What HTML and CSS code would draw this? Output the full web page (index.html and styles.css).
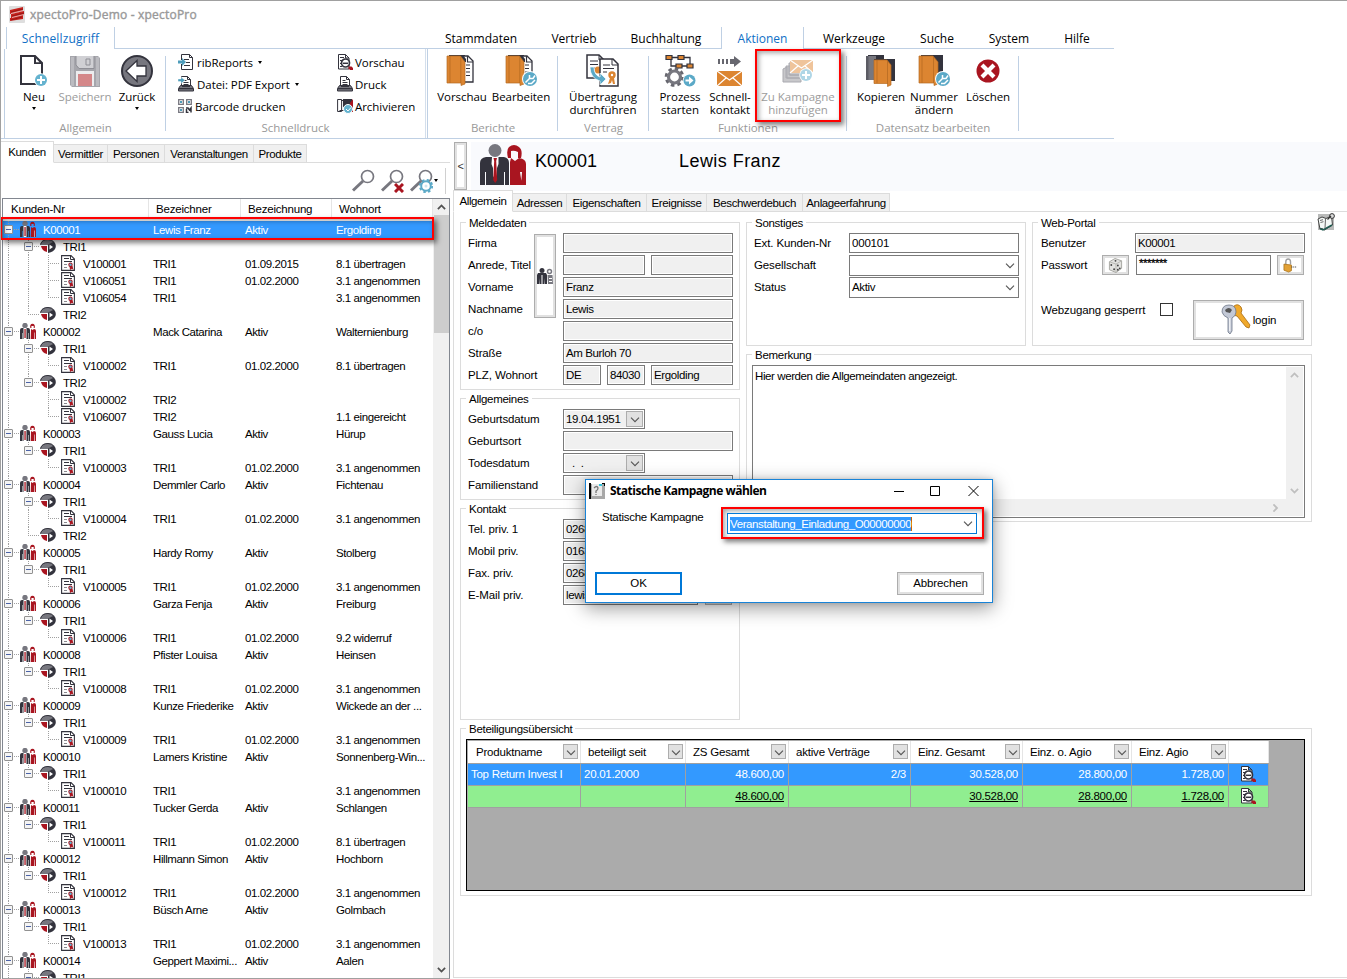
FILE: index.html
```html
<!DOCTYPE html>
<html lang="de">
<head>
<meta charset="utf-8">
<title>xpectoPro-Demo - xpectoPro</title>
<link rel="stylesheet" href="styles.css">
</head>
<body>
<svg class="defs" width="0" height="0">
  <symbol id="i-people" viewBox="0 0 46 42">
    <circle cx="15" cy="6.500" r="6.500" fill="#77777f"/>
    <path fill="#33333d" d="M6 13h18q5 1 5 6v22h-4V28h-1v13H14.500 6V28H5v13H0V19q0-5 6-6z"/>
    <path fill="#fff" d="M12 13h6.500v7l-1.500 4v8l-2 3-2-3v-8l-1.500-4z"/>
    <path fill="#a91520" d="M13.500 14h3.500l-.8 3 1 19-2 3-2-3 1-19z"/>
    <path fill="#a91520" d="M28 14q-2-8 1-11 5-4 10 0 4 3 2 11l-3 0v-6q-4-2-7-1v7z"/>
    <path fill="#a91520" d="M31 14l4 3 4-3q7 1 7 6v21h-5l1-13-2 0 2 13H30V18z"/>
  </symbol>
  <symbol id="i-cust" viewBox="0 0 16 16">
    <circle cx="5" cy="2.500" r="2.700" fill="#77777f"/>
    <path fill="#33333d" d="M2 5h6q2 0 2 2v9H8.500v-6H8v6H2.500v-6H2v6H0V7q0-2 2-2z"/>
    <path fill="#fff" d="M3.500 5h3v11h-3z"/><path fill="#a91520" d="M4.400 6h1.300v9H4.400zM10.300 5Q9.500 1 12.500.8 15.500 1 14.700 5h-1V3h-2.300v2zM11 6l1.500 1L14 6q2 0 2 2v8h-1.500v-6l-.3 6h-3.500z"/>
    <path fill="#fff" d="M14 9.500h.5V16H14z"/>
  </symbol>
  <symbol id="i-pie" viewBox="0 0 16 14">
    <path fill="#77777f" d="M0 6q1-6 8-6 4 0 6 3L8 6z"/><path fill="none" stroke="#33333d" d="M.5 5.500Q2 .5 8 .5q4 0 6 3"/>
    <path fill="#a91520" d="M1 7h6v6Q2 12 1 7z"/><path fill="#33333d" d="M8 5.500l6-3q2.500 3 1.500 6.500-1.500 4-7.500 5z"/><path fill="#fff" d="M9.500 5.500L13 8l-3.500 2.500z"/>
  </symbol>
  <symbol id="i-doc" viewBox="0 0 14 16">
    <path fill="#fff" stroke="#33333d" stroke-width="1.100" d="M.6.600h9.400l3.400 3.400v11.400H.6z"/>
    <path stroke="#33333d" d="M9.500.5v4h4M3 3.500h5M3 6.500h8" fill="none"/><path stroke="#88888e" d="M3 9.500h3M3 12.500h3"/>
    <path fill="#a91520" d="M8.500 11h3l1 4-1.500-1.200L9 15z"/><circle cx="9.500" cy="9.800" r="2.200" fill="#a91520"/><circle cx="9.500" cy="9.800" r="1.200" fill="#65b3cf"/>
  </symbol>
  <symbol id="i-new" viewBox="0 0 32 34">
    <path fill="#fff" stroke="#33333d" stroke-width="2" d="M3 2h14l7 7v21H3z"/><path fill="#33333d" d="M16 1l9 9h-9z"/><path fill="#fff" d="M18 4.500l3.500 3.700H18z"/>
    <circle cx="23" cy="26" r="6.800" fill="#fff"/><circle cx="23" cy="26" r="6" fill="#65b3cf"/><path stroke="#fff" stroke-width="2" d="M19 26h8M23 22v8"/>
  </symbol>
  <symbol id="i-save" viewBox="0 0 32 34">
    <path fill="#a6a6ac" d="M1 2h28l2 2v29H3l-2-2z"/><path fill="#bbbbc0" d="M2 3h3v29H2zM27 3h3v29h-3z"/><path fill="#d0d0d4" d="M7 2h18v12H10l-3-3z"/><path fill="none" stroke="#8f8f96" d="M7 2v9l3 3.500h15V2M17 5h4v6h-4z"/><path fill="#ececee" d="M7 17h18v15H7z"/><path fill="#d48789" d="M9 20h14v12H9z"/>
  </symbol>
  <symbol id="i-back" viewBox="0 0 32 32">
    <circle cx="16" cy="16" r="15" fill="#77777f" stroke="#33333d" stroke-width="2"/><path fill="#fff" stroke="#33333d" stroke-width="1.300" d="M5 16L16 5.500V11h9v10h-9v5.500z"/>
  </symbol>
  <symbol id="i-page" viewBox="0 0 16 16">
    <path fill="#fff" stroke="#33333d" d="M3.500 6V.5h8l3 3v12h-11V10M11.500.5v3h3M6 5.500h5M8 8.500h4M6 11.500h6"/><path fill="#4e9dbb" d="M0 6.500h4V4l4 4-4 4V9.500H0z"/>
  </symbol>
  <symbol id="i-print" viewBox="0 0 16 16">
    <path fill="#fff" stroke="#33333d" d="M3.500 10V.5h6l3 3V10M9.500.5v3h3M5.500 4.500h3M5.500 6.500h5M5.500 8.500h5"/><path fill="#77777f" stroke="#33333d" d="M2.500 9.500h11l2 3v2.500H.5v-2.500z"/><path fill="#33333d" d="M1 12h14v1.300H1zM4 9h8v2H4z"/>
  </symbol>
  <symbol id="i-export" viewBox="0 0 16 16">
    <use href="#i-print"/><path fill="#4e9dbb" stroke="#fff" stroke-width=".4" d="M0 3h3V1l4 3.300L3 7.500v-2H0z"/>
  </symbol>
  <symbol id="i-qr" viewBox="0 0 14 14">
    <path fill="none" stroke="#77777f" stroke-width="1.300" d="M.7.7h4.600v4.600H.7zM8.700.7h4.600v4.600H8.700zM.7 8.700h4.600v4.600H.7z"/><path fill="#4e9dbb" d="M2 2h2v2H2zM10 2h2v2h-2zM2 10h2v2H2z"/><path stroke="#33333d" stroke-width="1.500" fill="none" d="M8 9h2l1.500 2L13 9v4.500M8.500 10v3.500h2"/>
  </symbol>
  <symbol id="i-view" viewBox="0 0 16 16">
    <path fill="#fff" stroke="#33333d" d="M1.500.5h7l3.500 3.500v11H1.500zM8.500.5v3.500h3.500M3 3.500h4M3 6.500h2M3 9.500h2M3 12.500h2"/><circle cx="8.500" cy="9" r="4" fill="#fff" stroke="#33333d" stroke-width="1.700"/><path stroke="#33333d" stroke-width="1.500" d="M6 9.300h5"/><path fill="#a91520" d="M11.500 12.500h3l1.500 1.500v2h-3l-1.500-1.500z"/>
  </symbol>
  <symbol id="i-arch" viewBox="0 0 16 16">
    <path fill="#fff" stroke="#33333d" d="M.6 1.500h4v12h-4zM4 2.500h4v10H2.500"/><path fill="#33333d" d="M6 1h9v8H6z"/><path fill="#a91520" d="M13 5l3-4v13h-3z"/><circle cx="11" cy="11" r="4.500" fill="#65b3cf" stroke="#fff"/><path fill="none" stroke="#fff" d="M9 11l2 2 3-3.500"/>
  </symbol>
  <symbol id="i-book" viewBox="0 0 32 34">
    <path fill="#33333d" d="M3 1h16v6H3z"/><path fill="#fff" stroke="#33333d" stroke-width="1.300" d="M12 2h10l5 5v21H12z"/><path fill="none" stroke="#33333d" stroke-width="1.200" d="M21.500 2v6H27M20 11h4M20 14.500h4M20 18h4M20 21.500h4"/>
    <path fill="#33333d" d="M12 1h5l3 4v3h-8z"/>
    <path fill="#dc8531" stroke="#b66b22" stroke-width=".7" d="M1 2h13.500l4.500 6v22l-4 1.500V29H1z"/><path stroke="#b66b22" stroke-width=".8" d="M4 2v27M14.800 3v26" fill="none"/>
  </symbol>
  <symbol id="i-blob" viewBox="0 0 16 16"><circle cx="8" cy="8" r="8" fill="#fff"/><circle cx="8" cy="8" r="7" fill="#5ba9c7"/><path fill="none" stroke="#fff" stroke-width="1.500" d="M3.500 11.500l4-4M7.500 4v3.500H11l2-3M6 12.500h3.500l3.500-3.500"/></symbol>
  <symbol id="i-trans" viewBox="0 0 34 34">
    <path fill="#fff" stroke="#33333d" stroke-width="1.500" d="M1 1h12l5 5v18H1z"/><path fill="none" stroke="#33333d" d="M4 7h8M4 10.500h8M4 14h5M13 1v5h5"/><circle cx="12" cy="16" r="3.500" fill="#dc8531"/>
    <path fill="#fff" stroke="#33333d" stroke-width="1.500" d="M14 5h13l5 5v22H14z"/><path fill="none" stroke="#33333d" d="M26 5v6h6M17 11h7M17 14.500h11M17 18h4"/><circle cx="26" cy="21" r="3.700" fill="#dc8531"/><circle cx="26" cy="21" r="1.200" fill="#fff"/><path fill="#dc8531" d="M24 24l-2 6 3-1 1-3 1 4 2 0-1-6z"/>
    <path fill="#5ba9c7" stroke="#fff" stroke-width=".7" d="M4 13h4q0 8 6 10v-4l6 6-6 6v-4Q4 24 4 13z"/>
  </symbol>
  <symbol id="i-proc" viewBox="0 0 32 34">
    <path fill="none" stroke="#33333d" stroke-width="1.300" d="M6 3.500h20V12M7 5v7h16"/><path fill="#dc8531" stroke="#33333d" stroke-width="1.200" d="M2 1.500h6v4H2zM14 1.500h6v4h-6zM12 10h6v4h-6zM23 10h6v4h-6z"/>
    <circle cx="10.500" cy="23" r="8.300" fill="none" stroke="#67676f" stroke-width="3" stroke-dasharray="3.500 3.020"/><circle cx="10.500" cy="23" r="6" fill="#fff" stroke="#77777f" stroke-width="3.200"/><circle cx="25.500" cy="26.500" r="6.800" fill="#fff"/><circle cx="25.500" cy="26.500" r="6" fill="#5ba9c7"/><path fill="#fff" d="M21.500 25.500H25v-3l4.500 4-4.500 4v-3h-3.500z"/>
  </symbol>
  <symbol id="i-mail" viewBox="0 0 26 32">
    <path fill="#67676f" d="M1 4h2v5H1zM5 4h2v5H5zM9 4h2v5H9zM13 4h4V1l7 5.500-7 5.500V9h-4z"/><path fill="#dc8531" d="M0 16h25v15H0z"/><path fill="none" stroke="#fff" stroke-width="1.200" d="M0 16l12.500 9L25 16M0 31l9-8M25 31l-9-8"/>
  </symbol>
  <symbol id="i-camp" viewBox="0 0 32 24">
    <path fill="#c8c8cb" stroke="#aaaab0" d="M1 9l4-2v11h14v4H1zM4 6h4v9h13v3H4zM7 3h3v9h13v3H7z"/><path fill="#efc49b" d="M8 0h23v13H8z"/><path fill="none" stroke="#fff" stroke-width="1.200" d="M8 0l11.500 8L31 0M8 13l8-7M31 13l-8-7"/><circle cx="24" cy="15" r="6.700" fill="#fff"/><circle cx="24" cy="15" r="6" fill="#afd6e6"/><path stroke="#fff" stroke-width="2" d="M20 15h8M24 11v8"/>
  </symbol>
  <symbol id="i-copy" viewBox="0 0 32 34">
    <path fill="#33333d" d="M3 1h16v8H3zM17 5h13v22H17z"/><path fill="#77777f" d="M1 2h10v24H1z"/><path fill="#5c5c64" d="M1 2h2.500v24H1z"/><path fill="#33333d" d="M9 5h16v4H9z"/><path fill="#dc8531" stroke="#b66b22" stroke-width=".7" d="M9 6h13l4 5v20l-3.500 1.500V29.500H9z"/><path stroke="#b66b22" stroke-width=".8" d="M12 6v23M22.500 7v23"/>
  </symbol>
  <symbol id="i-folder" viewBox="0 0 32 34">
    <path fill="#33333d" d="M3 1h22v25H3z"/><path fill="#dc8531" stroke="#b66b22" stroke-width=".7" d="M1 2h14l5 6v22l-4 1.500V29H1z"/><path stroke="#b66b22" stroke-width=".8" d="M4 2v27M15.500 3v26"/>
  </symbol>
  <symbol id="i-del" viewBox="0 0 24 24"><circle cx="12" cy="12" r="11.500" fill="#a91520"/><path stroke="#fff" stroke-width="4.200" d="M6 6l12 12M18 6L6 18"/></symbol>
  <symbol id="i-find" viewBox="0 0 24 24"><circle cx="16.500" cy="7.500" r="6" fill="#fff" stroke="#77777f" stroke-width="1.700"/><path stroke="#77777f" stroke-width="3" d="M12 12L2 21.500"/></symbol>
  <symbol id="i-x" viewBox="0 0 10 10"><path stroke="#a91520" stroke-width="3" d="M1 1l8 8M9 1L1 9"/></symbol>
  <symbol id="i-gear" viewBox="0 0 14 14"><circle cx="7" cy="7" r="4.800" fill="#fff" stroke="#5ba9c7" stroke-width="2"/><circle cx="7" cy="7" r="6.200" fill="none" stroke="#5ba9c7" stroke-width="1.800" stroke-dasharray="2.500 2.370"/><circle cx="7" cy="7" r="1.500" fill="#cfe6ef"/></symbol>
  <symbol id="i-down" viewBox="0 0 10 6"><path fill="none" stroke="#555" stroke-width="1.100" d="M1 .7l4 4 4-4"/></symbol>
  <symbol id="i-up" viewBox="0 0 10 6"><path fill="none" stroke="currentColor" stroke-width="2" d="M1 5.300l4-4 4 4"/></symbol>
</svg>

<div class="app">
  <header class="titlebar">
    <svg class="logo" viewBox="0 0 16 17"><rect width="16" height="17" rx="1" fill="#dedede"/><path fill="#c8201c" d="M1 4l13-3v4L1 8zM2 8l13-3v4L2 12zM1 12l13-3v4L1 15z"/><path stroke="#e9d5d4" stroke-width=".8" d="M2 7.500l12-3M3 11.500l12-3"/><path stroke="#7f1512" stroke-width=".7" d="M2 6l12-3M3 10l12-3M2 14l11-3"/></svg>
    <span>xpectoPro-Demo - xpectoPro</span>
  </header>

  <nav class="rtabs">
    <span class="rt quick">Schnellzugriff</span>
    <span class="rt gap"></span>
    <span class="rt w96">Stammdaten</span><span class="rt w90">Vertrieb</span><span class="rt w96 buch">Buchhaltung</span>
    <span class="rt on">Aktionen</span><span class="rt w100">Werkzeuge</span><span class="rt w66">Suche</span><span class="rt w78">System</span><span class="rt w58">Hilfe</span><span class="rt w8"></span>
  </nav>

  <section class="ribbon">
    <div class="grp g1">
      <div class="btns">
        <div class="btn w50"><svg class="i34"><use href="#i-new"/></svg><span>Neu</span><i class="tri"></i></div>
        <div class="btn w52 off"><svg class="i34"><use href="#i-save"/></svg><span>Speichern</span></div>
        <div class="btn w52"><svg class="i32"><use href="#i-back"/></svg><span>Zurück</span><i class="tri"></i></div>
      </div>
      <div class="cap">Allgemein</div>
    </div>
    <div class="grp g2">
      <div class="lists">
        <div class="list l1">
          <div class="item"><svg class="i16"><use href="#i-page"/></svg>ribReports<i class="tri"></i></div>
          <div class="item"><svg class="i16"><use href="#i-export"/></svg>Datei: PDF Export<i class="tri"></i></div>
          <div class="item"><svg class="i14"><use href="#i-qr"/></svg>Barcode drucken</div>
        </div>
        <div class="list">
          <div class="item"><svg class="i16"><use href="#i-view"/></svg>Vorschau</div>
          <div class="item"><svg class="i16"><use href="#i-print"/></svg>Druck</div>
          <div class="item"><svg class="i16"><use href="#i-arch"/></svg>Archivieren</div>
        </div>
      </div>
      <div class="cap">Schnelldruck</div>
    </div>
    <div class="grp g3">
      <div class="btns">
        <div class="btn w58"><svg class="i34"><use href="#i-book"/></svg><span>Vorschau</span></div>
        <div class="btn w60"><div class="stack"><svg class="i34"><use href="#i-book"/></svg><svg class="blob"><use href="#i-blob"/></svg></div><span>Bearbeiten</span></div>
      </div>
      <div class="cap">Berichte</div>
    </div>
    <div class="grp g4">
      <div class="btns"><div class="btn w90"><svg class="i34w"><use href="#i-trans"/></svg><span>Übertragung<br>durchführen</span></div></div>
      <div class="cap">Vertrag</div>
    </div>
    <div class="grp g5">
      <div class="btns">
        <div class="btn w50"><svg class="i34"><use href="#i-proc"/></svg><span>Prozess<br>starten</span></div>
        <div class="btn w50"><svg class="imail"><use href="#i-mail"/></svg><span>Schnell-<br>kontakt</span></div>
        <div class="btn off camp"><svg class="icamp"><use href="#i-camp"/></svg><span>Zu Kampagne<br>hinzufügen</span></div>
      </div>
      <div class="cap">Funktionen</div>
    </div>
    <div class="grp g6">
      <div class="btns">
        <div class="btn w52"><svg class="i34"><use href="#i-copy"/></svg><span>Kopieren</span></div>
        <div class="btn w54"><div class="stack"><svg class="i34"><use href="#i-folder"/></svg><svg class="blob"><use href="#i-blob"/></svg></div><span>Nummer<br>ändern</span></div>
        <div class="btn w54"><svg class="idel"><use href="#i-del"/></svg><span>Löschen</span></div>
      </div>
      <div class="cap">Datensatz bearbeiten</div>
    </div>
  </section>

  <main class="main">
    <aside class="left">
      <div class="tabs">
        <span class="tab on t52">Kunden</span><span class="tab t54">Vermittler</span><span class="tab t56">Personen</span><span class="tab t89">Veranstaltungen</span><span class="tab t53">Produkte</span>
      </div>
      <div class="tools">
        <svg class="find"><use href="#i-find"/></svg>
        <div class="stack"><svg class="find"><use href="#i-find"/></svg><svg class="mini x"><use href="#i-x"/></svg></div>
        <div class="stack"><svg class="find"><use href="#i-find"/></svg><svg class="mini gear"><use href="#i-gear"/></svg></div>
        <i class="tri"></i><i class="vsep"></i>
      </div>
      <div class="grid">
        <div class="treewrap">
          <div class="thead"><span>Kunden-Nr</span><span>Bezeichner</span><span>Bezeichnung</span><span>Wohnort</span></div>
          <div class="tree" id="tree"></div>
        </div>
        <div class="sbar"><svg class="arr"><use href="#i-up"/></svg><div class="thumb"></div><svg class="arr flip"><use href="#i-up"/></svg></div>
        <div class="mark rowmark"></div>
      </div>
    </aside>

    <section class="right">
      <div class="head">
        <button class="fold">&lt;</button>
        <div class="headbar"><svg class="bigpeople"><use href="#i-people"/></svg><span class="hid">K00001</span><span class="hname">Lewis Franz</span></div>
      </div>
      <div class="tabs rt2">
        <span class="tab on t60">Allgemein</span><span class="tab t54">Adressen</span><span class="tab t80">Eigenschaften</span><span class="tab t60b">Ereignisse</span><span class="tab t96">Beschwerdebuch</span><span class="tab t87">Anlageerfahrung</span>
      </div>
      <div class="page">
        <div class="cols">
          <div class="col1">
            <div class="box melde"><div class="leg">Meldedaten</div>
              <div class="form">
                <button class="pbtn"><svg viewBox="0 0 16 16"><circle cx="5" cy="2.500" r="2.500" fill="#33333d"/><path fill="#33333d" d="M1 5h8l1 2v9H8v-6l-.5 6h-2V7h-1v9h-2L2 10v6H0V7z"/><circle cx="12.500" cy="3.500" r="2" fill="#fff" stroke="#77777f" stroke-width="1.500"/><path fill="#77777f" d="M10.500 7h5l.5 9h-5z"/><path fill="#fff" d="M12 10h3v1h-3zM12 13h3v1h-3z"/></svg></button>
                <label>Firma</label><div class="f"><i class="in"></i></div>
                <label>Anrede, Titel</label><div class="f"><i class="in n82"></i><i class="in n82"></i></div>
                <label>Vorname</label><div class="f"><i class="in">Franz</i></div>
                <label>Nachname</label><div class="f"><i class="in">Lewis</i></div>
                <label>c/o</label><div class="f"><i class="in"></i></div>
                <label>Straße</label><div class="f"><i class="in">Am Burloh 70</i></div>
                <label>PLZ, Wohnort</label><div class="f"><i class="in n38">DE</i><i class="in n38">84030</i><i class="in n82">Ergolding</i></div>
              </div>
            </div>
            <div class="box allg"><div class="leg">Allgemeines</div>
              <div class="form">
                <label>Geburtsdatum</label><div class="f"><i class="in n82 date">19.04.1951<b class="drop"><svg><use href="#i-down"/></svg></b></i></div>
                <label>Geburtsort</label><div class="f"><i class="in"></i></div>
                <label>Todesdatum</label><div class="f"><i class="in n82 date empty">. &nbsp;.<b class="drop"><svg><use href="#i-down"/></svg></b></i></div>
                <label>Familienstand</label><div class="f"><i class="in"></i></div>
              </div>
            </div>
            <div class="box kont"><div class="leg">Kontakt</div>
              <div class="form">
                <label>Tel. priv. 1</label><div class="f"><i class="in">0268</i></div>
                <label>Mobil priv.</label><div class="f"><i class="in">0163</i></div>
                <label>Fax. priv.</label><div class="f"><i class="in">0268</i></div>
                <label>E-Mail priv.</label><div class="f"><i class="in n135">lewis</i><button class="n27"></button></div>
              </div>
            </div>
          </div>
          <div class="col2">
            <div class="pair">
              <div class="box sonst"><div class="leg">Sonstiges</div>
                <div class="form">
                  <label>Ext. Kunden-Nr</label><div class="f"><i class="in w wide">000101</i></div>
                  <label>Gesellschaft</label><div class="f"><i class="in w combo"><svg><use href="#i-down"/></svg></i></div>
                  <label>Status</label><div class="f"><i class="in w combo">Aktiv<svg><use href="#i-down"/></svg></i></div>
                </div>
              </div>
              <div class="box web"><div class="leg">Web-Portal</div>
                <div class="wrow"><label>Benutzer</label><i class="in user">K00001</i></div>
                <div class="wrow"><label>Passwort</label>
                  <button class="sq"><svg viewBox="0 0 16 16"><path fill="#e3e3e0" stroke="#a5a5a0" d="M1.500 4l6-3.500 7 2.500v8l-6 4.500-7-3z"/><path fill="none" stroke="#b5b5b0" d="M1.500 4l7 2.500 6-3.500M8.500 6.500v9"/><g fill="#444"><circle cx="3.500" cy="7.500" r="1"/><circle cx="6.500" cy="12" r="1"/><circle cx="10.500" cy="8" r="1"/><circle cx="12.500" cy="11" r="1"/><circle cx="10.500" cy="12.500" r="1"/><circle cx="8" cy="3" r="1"/></g></svg></button>
                  <i class="in w pw">*******</i>
                  <button class="sq lock"><svg viewBox="0 0 16 16"><path fill="none" stroke="#a0a0a0" stroke-width="1.500" d="M3 8V4q0-3 2.500-3T8 4v3"/><path fill="#e2a136" stroke="#a8711a" stroke-width=".8" d="M1 6.500l8 1v6l-3 1.500-5-2z"/><path fill="#333" d="M9 9h1v1H9zM11 9h1v1h-1zM13 9h1v1h-1z"/></svg></button>
                </div>
                <div class="wrow login"><label>Webzugang gesperrt</label><i class="chk"></i>
                  <button class="loginbtn"><svg viewBox="0 0 30 31"><path fill="#f0a92b" stroke="#a86b10" stroke-width=".8" d="M13 2q4-3 7 1 2 3 0 6l9 12-1 3-3-1-9-11q-4 0-5-3z"/><path fill="#c3c9d6" stroke="#6d7688" stroke-width=".8" d="M8 1q7 0 7 7 0 4-4 6v13l-2 3-2-2V14q-5-2-6-6 0-7 7-7z"/><path fill="#555" d="M4 6q4-4 7 0l-2 3-4-1z"/><path stroke="#fff" d="M8.800 14v13"/></svg>login</button>
                </div>
              </div>
            </div>
            <div class="box bem"><div class="leg">Bemerkung</div>
              <div class="area">
                <div class="atext">Hier werden die Allgemeindaten angezeigt.</div>
                <div class="av"><svg class="arr"><use href="#i-up"/></svg><svg class="arr flip"><use href="#i-up"/></svg></div>
                <div class="ah"><svg class="arr turn"><use href="#i-up"/></svg></div><div class="ac"></div>
              </div>
            </div>
          </div>
          <svg class="note" viewBox="0 0 18 18"><path fill="#b9bab9" d="M1 1h16v16H1z"/><path fill="#f4f8f6" stroke="#444" d="M1 6l4-2 4 1.500L14.500 3l1 9-8 5-2.500-1.500-2 .5z"/><path fill="none" stroke="#1f5a50" stroke-width="1.500" d="M3 15.500l3 1.500 9-5"/><path fill="none" stroke="#666" d="M8.500 6l-.5 9M3 7.500l3-.8M3.500 9.500l3-.8"/><circle cx="15" cy="3" r="2.400" fill="#ddd" stroke="#333"/><path stroke="#333" stroke-width="1.300" d="M10.500 6.500L14 3"/></svg>
        </div>
        <div class="box bet"><div class="leg">Beteiligungsübersicht</div>
          <div class="tbox">
            <div class="tr th"><span>Produktname<b class="drop"><svg><use href="#i-down"/></svg></b></span><span>beteiligt seit<b class="drop"><svg><use href="#i-down"/></svg></b></span><span>ZS Gesamt<b class="drop"><svg><use href="#i-down"/></svg></b></span><span>aktive Verträge<b class="drop"><svg><use href="#i-down"/></svg></b></span><span>Einz. Gesamt<b class="drop"><svg><use href="#i-down"/></svg></b></span><span>Einz. o. Agio<b class="drop"><svg><use href="#i-down"/></svg></b></span><span>Einz. Agio<b class="drop"><svg><use href="#i-down"/></svg></b></span><span></span></div>
            <div class="tr sel"><span class="l">Top Return Invest I</span><span class="l">20.01.2000</span><span>48.600,00</span><span>2/3</span><span>30.528,00</span><span>28.800,00</span><span>1.728,00</span><span class="ic"><svg><use href="#i-view"/></svg></span></div>
            <div class="tr sum"><span></span><span></span><span>48.600,00</span><span></span><span>30.528,00</span><span>28.800,00</span><span>1.728,00</span><span class="ic"><svg><use href="#i-view"/></svg></span></div>
          </div>
        </div>
      </div>
    </section>
  </main>

  <div class="mark campmark"></div>

  <div class="dialog">
    <div class="dtitle">
      <svg class="dicon" viewBox="0 0 16 16"><path fill="#a8a8a8" d="M2 1h14v15H2z"/><path fill="#e9e9e9" d="M3 1h10v12H3z"/><path fill="#000" d="M0 0h2v16H0z"/><path fill="none" stroke="#777" stroke-width="1.300" d="M5 5q3-3 4 0 0 2-2 3v2M7 11v1"/><path fill="#33c5dc" d="M10 1h3v2h-3z"/><path fill="#000" d="M13 0h3v3h-1V1h-2z"/></svg>
      <span>Statische Kampagne wählen</span>
      <svg class="wctl" viewBox="0 0 86 12"><path fill="none" stroke="#000" d="M0 6.500h10M36.500 1.500h9v9h-9zM74.500 1l10 10M84.500 1l-10 10"/></svg>
    </div>
    <div class="drow"><label>Statische Kampagne</label>
      <div class="mark fieldmark"><div class="dcombo"><span>Veranstaltung_Einladung_O00000000</span><svg><use href="#i-down"/></svg></div></div>
    </div>
    <div class="dbtns"><button class="ok">OK</button><button class="cancel">Abbrechen</button></div>
  </div>
</div>
<script src="app.js"></script>
</body>
</html>
```
FILE: styles.css
```css
* { box-sizing: border-box; }
body { margin: 0; background: #fff; overflow: hidden; color: #000; font: 11.5px/16px "Liberation Sans", Arial, sans-serif; letter-spacing: -0.35px; }
i, b { font-style: normal; font-weight: normal; }
svg { display: block; flex: none; }
.defs { position: absolute; }
button { font: inherit; letter-spacing: inherit; color: #000; padding: 0; background: #fff; border: 1px solid #adadad; box-shadow: inset 0 0 0 2px #e1e1e1; display: flex; align-items: center; justify-content: center; }
.app { position: relative; width: 1347px; height: 979px; border-top: 1px solid #a0a0a0; border-left: 1px solid #a0a0a0; display: flex; flex-direction: column; overflow: hidden; }
.stack { position: relative; }
.tri { width: 0; height: 0; border: 2.5px solid transparent; border-top: 3px solid #000; border-bottom: 0; }
.mark { border: 2px solid #f00; box-shadow: 3px 3px 5px rgba(0,0,0,.5), inset 2px 2px 5px rgba(0,0,0,.35); }

/* title and ribbon */
.titlebar { height: 26px; display: flex; align-items: center; gap: 5px; padding-left: 8px; color: #999; font: 12px "Open Sans", sans-serif; -webkit-text-stroke: .4px #999; letter-spacing: .2px; }
.logo { width: 16px; height: 17px; }
.rtabs { display: flex; width: 1113px; height: 22px; font: 12px/24px "Open Sans", sans-serif; letter-spacing: 0; }
.rt { text-align: center; border-bottom: 1px solid #bfd0e4; flex: none; height: 22px; }
.quick { width: 109px; margin-left: 5px; color: #0f6fc6; border: 1px solid #bfd0e4; border-width: 0 1px; letter-spacing: .15px; }
.gap { width: 318px; }
.w8 { flex: 1; }
.rt.on { width: 83px; color: #0f6fc6; border: 1px solid #bfd0e4; border-width: 0 1px; }
.w50 { width: 50px; } .w52 { width: 52px; } .w54 { width: 54px; } .w58 { width: 58px; } .w60 { width: 60px; } .w66 { width: 66px; } .w78 { width: 78px; } .w90 { width: 90px; } .w96 { width: 96px; } .w100 { width: 100px; }
.rt.buch { width: 102px; padding-right: 8px; }
.ribbon { display: flex; width: 1113px; height: 90px; padding-left: 3px; border-bottom: 1px solid #bfd0e4; font: 11.5px/13px "Open Sans", sans-serif; letter-spacing: -.05px; }
.grp { height: 89px; display: flex; flex-direction: column; flex: none; padding-top: 5px; background: linear-gradient(#bfd0e4,#bfd0e4) right 7px / 1px 75px no-repeat; }
.g1 { width: 162px; border-left: 1px solid #bfd0e4; } .g1 .btns { padding-left: 4px; }
.g2 { width: 260px; border-right: 1px solid #d4dfec; background: none; }
.g3 { width: 131px; border-left: 1px solid #bfd0e4; margin-left: 1px; } .g3 .btns { padding-left: 5px; }
.g4 { width: 91px; } .g5 { width: 198px; } .g6 { width: 172px; }
.g5 .btns { padding-left: 6px; } .g6 .btns { padding-left: 8px; }
.btns { display: flex; height: 67px; }
.btn { display: flex; flex-direction: column; align-items: center; text-align: center; white-space: nowrap; flex: none; }
.btn > :first-child { margin-bottom: 2px; }
.btn .tri { margin-top: 4px; border-width: 3px 2.5px 0; }
.off { color: #9c9c9c; }
.cap { text-align: center; color: #999; }
.i34 { width: 32px; height: 34px; } .i34w { width: 34px; height: 34px; } .i32 { width: 32px; height: 32px; }
.i16 { width: 16px; height: 16px; } .i14 { width: 14px; height: 14px; }
.btn > .i32 { margin: 1px 0 3px; }
.btn > .imail { width: 26px; height: 32px; margin: 1px 0 3px; }
.btn > .icamp { width: 32px; height: 24px; margin: 6px 0; }
.btn > .idel { width: 24px; height: 24px; margin: 5px 0 7px; }
.camp { width: 86px; }
.blob { position: absolute; right: -1px; bottom: 1px; width: 16px; height: 16px; }
.lists { display: flex; height: 67px; padding-left: 12px; }
.list { margin-top: -3px; }
.l1 { width: 159px; }
.item { height: 22px; display: flex; align-items: center; gap: 2px; }
.l1 .item { gap: 3px; } .item .tri { margin: 1px 0 0 2px; }

/* tabs */
.main { flex: 1; min-height: 0; display: flex; }
.tabs { display: flex; align-items: flex-end; height: 23px; background: linear-gradient(#dcdcdc,#dcdcdc) bottom / 100% 1px no-repeat; }
.tab { height: 19px; line-height: 19px; text-align: center; background: #f0f0f0; border: 1px solid #dcdcdc; border-left: 0; flex: none; white-space: nowrap; letter-spacing: -.38px; }
.tab.on { height: 22px; line-height: 20px; background: #fff; border-bottom-color: #fff; }
.t52 { width: 53px; } .t54 { width: 54px; } .t56 { width: 57px; } .t89 { width: 89px; } .t53 { width: 53px; } .t60 { width: 60px; border-left: 1px solid #dcdcdc; } .t80 { width: 80px; } .t60b { width: 60px; } .t96 { width: 96px; } .t87 { width: 87px; }

/* left pane */
.left { width: 449px; display: flex; flex-direction: column; padding-top: 1px; }
.tools { height: 35px; display: flex; align-items: center; justify-content: flex-end; gap: 5px; padding-right: 4px; }
.find { width: 24px; height: 24px; }
.mini { position: absolute; right: 0; bottom: 0; } .x { width: 10px; height: 10px; } .gear { width: 14px; height: 14px; }
.tools .tri { margin-left: -4px; } .vsep { width: 1px; height: 26px; background: #d0d0d0; margin-left: 2px; }
.grid { position: relative; flex: 1; min-height: 0; display: flex; border: 1px solid #828790; border-bottom: 1px solid #a0a0a0; margin-left: 1px; }
.treewrap { flex: 1; overflow: hidden; }
.thead { display: grid; grid-template-columns: 146px 92px 91px 101px; height: 22px; line-height: 21px; letter-spacing: -.2px; }
.thead span { border-right: 1px solid #e5e5e5; padding-left: 7px; height: 18px; }
.thead span:first-child { padding-left: 8px; }
.row { display: grid; grid-template-columns: 150px 92px 91px 97px; height: 17px; line-height: 18px; white-space: nowrap; letter-spacing: -.4px; }
.row.sel { background: #39f; color: #fff; }
.node { display: flex; height: 17px; }
.node svg { width: 16px; height: 16px; margin-right: 7px; }
.node .t-pie { height: 14px; margin-top: 1px; }
.node .t-doc { width: 14px; height: 16px; margin: 0 8px 0 1px; }
.ln { width: 20px; height: 17px; flex: none; display: flex; align-items: center; background: repeating-linear-gradient(#a0a0a0 0 1px, transparent 1px 2px) 5px 0 / 1px 100% no-repeat; }
.ln.none { background: none; }
.ln.last { background-size: 1px 9px; }
.ln.h { background: repeating-linear-gradient(#a0a0a0 0 1px, transparent 1px 2px) 5px 0 / 1px 100% no-repeat, repeating-linear-gradient(90deg, #a0a0a0 0 1px, transparent 1px 2px) 5px 8px / 14px 1px no-repeat; }
.ln.h.last { background-size: 1px 9px, 14px 1px; }
.pm { width: 9px; height: 9px; border: 1px solid #919191; border-radius: 1px; margin: 0 0 1px 1px; background: linear-gradient(#4b63a7,#4b63a7) center / 5px 1px no-repeat, #f4f4f4; }
.ln.root { width: 17px; }
.sbar { width: 16px; background: #f0f0f0; display: flex; flex-direction: column; align-items: center; color: #505050; }
.arr { width: 9px; height: 6px; margin: 5px 0; }
.flip { transform: rotate(180deg); margin: auto 0 5px; }
.thumb { width: 15px; height: 118px; background: #cdcdcd; }
.rowmark { position: absolute; left: -3px; top: 18px; width: 434px; height: 23px; }

/* right pane */
.right { flex: 1; min-width: 0; margin-left: 3px; display: flex; flex-direction: column; }
.head { display: flex; padding: 3px 0 0 1px; height: 52px; gap: 4px; }
.fold { width: 13px; height: 48px; font-size: 11px; color: #333; }
.headbar { flex: 1; background: #f9fafd; height: 49px; display: flex; font-size: 18px; line-height: 38px; letter-spacing: 0; padding-left: 9px; }
.bigpeople { width: 46px; height: 42px; margin: 2px 9px 0 0; }
.hid { width: 144px; }
.hname { letter-spacing: .45px; }
.rt2 { height: 21px; }
.page { flex: 1; border: 1px solid #dcdcdc; border-top: 0; border-right: 0; padding: 10px 0 0 6px; margin-bottom: 1px; letter-spacing: -.12px; }
.cols { display: flex; gap: 6px; height: 506px; }
.col1 { width: 280px; }
.col2 { width: 566px; }
.box { border: 1px solid #dcdcdc; }
.leg { width: max-content; margin: -8px 0 2px 5px; padding: 0 3px; height: 16px; background: #fff; letter-spacing: -.28px; }
.melde { height: 168px; margin-bottom: 8px; } .allg { height: 102px; margin-bottom: 8px; } .kont { height: 212px; }
.form { display: grid; grid-template-columns: 66px 22px 170px; grid-auto-rows: 20px; row-gap: 2px; padding-left: 7px; justify-content: start; }
.form label { grid-column: 1; white-space: nowrap; line-height: 20px; }
.form .f { grid-column: 3; margin-left: 7px; width: 170px; display: flex; gap: 6px; }
.pbtn { grid-column: 2; grid-row: 1 / 5; width: 22px; height: 84px; margin-top: 1px; }
.pbtn svg { width: 16px; height: 16px; }
.in { flex: 1; height: 20px; border: 1px solid #7a7a7a; background: #f0f0f0; box-shadow: inset 0 0 0 1px #fff; padding-left: 2px; line-height: 19px; letter-spacing: -.38px; display: flex; justify-content: space-between; overflow: hidden; white-space: nowrap; }
.n82, .n38, .n135 { flex: none; } .n82 { width: 82px; } .n38 { width: 38px; } .n135 { width: 135px; } .n27 { width: 27px; height: 20px; margin-left: 1px; }
.wide { letter-spacing: -.2px; }
.date { padding-right: 1px; letter-spacing: -.3px; } .empty { padding-left: 8px; }
.drop { width: 17px; height: 16px; margin-top: 1px; border: 1px solid #adadad; background: #e1e1e1; display: flex; align-items: center; justify-content: center; flex: none; }
.drop svg, .combo svg, .dcombo svg { width: 10px; height: 6px; margin-left: auto; }
.drop svg { margin: 2px auto 0; }
.w { background: #fff; }
.combo { height: 21px; align-items: center; padding-right: 3px; }
.pair { display: flex; gap: 6px; height: 124px; margin-bottom: 8px; }
.sonst, .web { width: 280px; }
.wrow { display: flex; padding-left: 8px; height: 22px; line-height: 20px; }
.wrow label { width: 61px; white-space: nowrap; }
.user { flex: none; width: 170px; margin-left: 33px; }
.sq { width: 27px; height: 20px; } .sq svg { width: 15px; height: 15px; }
.pw { flex: none; width: 135px; margin: 0 6px 0 7px; line-height: 15px; letter-spacing: -.5px; -webkit-text-stroke: .3px #000; }
.wrow.login { height: 40px; margin-top: 23px; }
.wrow.login label { width: 119px; }
.chk { width: 13px; height: 13px; border: 1px solid #333; margin: 3px 20px 0 0; }
.loginbtn { width: 111px; height: 40px; gap: 2px; } .loginbtn svg { width: 30px; height: 31px; margin-bottom: 2px; }
.bem { height: 168px; }
.area { margin: 0 6px 0 5px; height: 153px; border: 1px solid #7a7a7a; display: grid; grid-template-columns: 1fr 17px; grid-template-rows: 1fr 17px; padding: 1px; }
.atext { padding: 0 1px; line-height: 18px; letter-spacing: -.4px; }
.av, .ah, .ac { background: #f0f0f0; display: flex; color: #bfbfbf; } .av { flex-direction: column; align-items: center; } .ah { justify-content: flex-end; align-items: center; }
.turn { transform: rotate(90deg); margin: 0 6px 0 0; }
.note { width: 18px; height: 18px; margin-top: -9px; margin-left: -1px; }
.bet { width: 852px; height: 168px; }
.tbox { margin: 0 6px 0 5px; height: 152px; border: 1px solid #000; background: #ababab; padding: 1px 0 0 1px; }
.tr { display: grid; grid-template-columns: 113px 105px 103px 122px 112px 109px 97px 40px; width: 801px; height: 22px; line-height: 22px; letter-spacing: -.27px; }
.tr span { border-right: 1px solid #a0a0a0; border-bottom: 1px solid #a0a0a0; text-align: right; padding-right: 4px; white-space: nowrap; }
.tr .l { text-align: left; padding-left: 3px; }
.th { background: #fff; letter-spacing: -.2px; }
.th span { border-right-color: #e5e5e5; display: flex; justify-content: space-between; padding: 0 2px 0 7px; }
.th span:first-child { padding-left: 8px; }
.th .drop { width: 15px; height: 15px; margin-top: 3px; }
.sel > span { color: #fff; } .tr.sel { background: #39f; } .sum { background: #90ee90; text-decoration: underline; }
.ic svg { width: 16px; height: 16px; margin: 3px 0 0 11px; }

/* overlays */
.campmark { position: absolute; left: 754px; top: 48px; width: 86px; height: 73px; }
.dialog { position: absolute; left: 584px; top: 478px; width: 408px; height: 124px; background: #fff; border: 1px solid #1883d7; box-shadow: 0 5px 18px rgba(0,0,0,.4), 0 0 5px rgba(0,0,0,.15); display: flex; flex-direction: column; }
.dtitle { height: 21px; display: flex; align-items: center; padding: 0 12px 0 3px; gap: 5px; font: 700 12px "Open Sans", sans-serif; letter-spacing: -.5px; }
.dicon { width: 16px; height: 16px; } .wctl { width: 86px; height: 12px; margin-left: auto; }
.drow { display: flex; justify-content: space-between; padding: 6px 8px 0 16px; letter-spacing: -.26px; }
.drow label { line-height: 21px; }
.fieldmark { width: 263px; height: 32px; padding: 4px; }
.dcombo { height: 21px; width: 250px; border: 1px solid #0078d7; background: #fff; display: flex; align-items: center; padding: 0 3px 0 2px; letter-spacing: -.4px; }
.dcombo span { background: #39f; color: #fff; line-height: 14px; border-right: 1px solid #c60; }
.dbtns { display: flex; justify-content: space-between; margin: 33px 8px 0 9px; }
.dbtns button { width: 87px; height: 23px; letter-spacing: -.1px; padding-bottom: 1px; } .dbtns .ok { border: 2px solid #0078d7; box-shadow: none; }
```
FILE: app.js
```js
// Level | id | Bezeichner | Bezeichnung | Wohnort
const data = `0|K00001|Lewis Franz|Aktiv|Ergolding
1|TRI1
2|V100001|TRI1|01.09.2015|8.1 übertragen
2|V106051|TRI1|01.02.2000|3.1 angenommen
2|V106054|TRI1||3.1 angenommen
1|TRI2
0|K00002|Mack Catarina|Aktiv|Walternienburg
1|TRI1
2|V100002|TRI1|01.02.2000|8.1 übertragen
1|TRI2
2|V100002|TRI2
2|V106007|TRI2||1.1 eingereicht
0|K00003|Gauss Lucia|Aktiv|Hürup
1|TRI1
2|V100003|TRI1|01.02.2000|3.1 angenommen
0|K00004|Demmler Carlo|Aktiv|Fichtenau
1|TRI1
2|V100004|TRI1|01.02.2000|3.1 angenommen
1|TRI2
0|K00005|Hardy Romy|Aktiv|Stolberg
1|TRI1
2|V100005|TRI1|01.02.2000|3.1 angenommen
0|K00006|Garza Fenja|Aktiv|Freiburg
1|TRI1
2|V100006|TRI1|01.02.2000|9.2 widerruf
0|K00008|Pfister Louisa|Aktiv|Heinsen
1|TRI1
2|V100008|TRI1|01.02.2000|3.1 angenommen
0|K00009|Kunze Friederike|Aktiv|Wickede an der ...
1|TRI1
2|V100009|TRI1|01.02.2000|3.1 angenommen
0|K00010|Lamers Kristine|Aktiv|Sonnenberg-Win...
1|TRI1
2|V100010|TRI1||3.1 angenommen
0|K00011|Tucker Gerda|Aktiv|Schlangen
1|TRI1
2|V100011|TRI1|01.02.2000|8.1 übertragen
0|K00012|Hillmann Simon|Aktiv|Hochborn
1|TRI1
2|V100012|TRI1|01.02.2000|3.1 angenommen
0|K00013|Büsch Arne|Aktiv|Golmbach
1|TRI1
2|V100013|TRI1|01.02.2000|3.1 angenommen
0|K00014|Geppert Maximi...|Aktiv|Aalen
1|TRI1`.split('\n').map(l => l.split('|'));

const icons = ['cust', 'pie', 'doc'];

// True when another node of the given level follows before its parent ends.
function continues(index, level) {
  for (let j = index + 1; j < data.length; j++) {
    if (+data[j][0] < level) return false;
    if (+data[j][0] === level) return true;
  }
  return level === 0;
}

document.getElementById('tree').innerHTML = data.map((d, i) => {
  const level = +d[0];
  const hasChild = i === data.length - 1 || +data[i + 1][0] > level;
  let cells = '';
  for (let k = 0; k <= level; k++) {
    const own = k === level;
    const more = continues(i, k);
    let cls = own ? 'ln h' + (more ? '' : ' last') : 'ln' + (more ? '' : ' none');
    if (own) cls += ' root';
    cells += `<i class="${cls}">${own && hasChild ? '<i class="pm"></i>' : ''}</i>`;
  }
  const icon = icons[level];
  return `<div class="row${i === 0 ? ' sel' : ''}"><span class="node">${cells}<svg class="t-${icon}"><use href="#i-${icon}"/></svg>${d[1]}</span><span>${d[2] || ''}</span><span>${d[3] || ''}</span><span>${d[4] || ''}</span></div>`;
}).join('');
```
